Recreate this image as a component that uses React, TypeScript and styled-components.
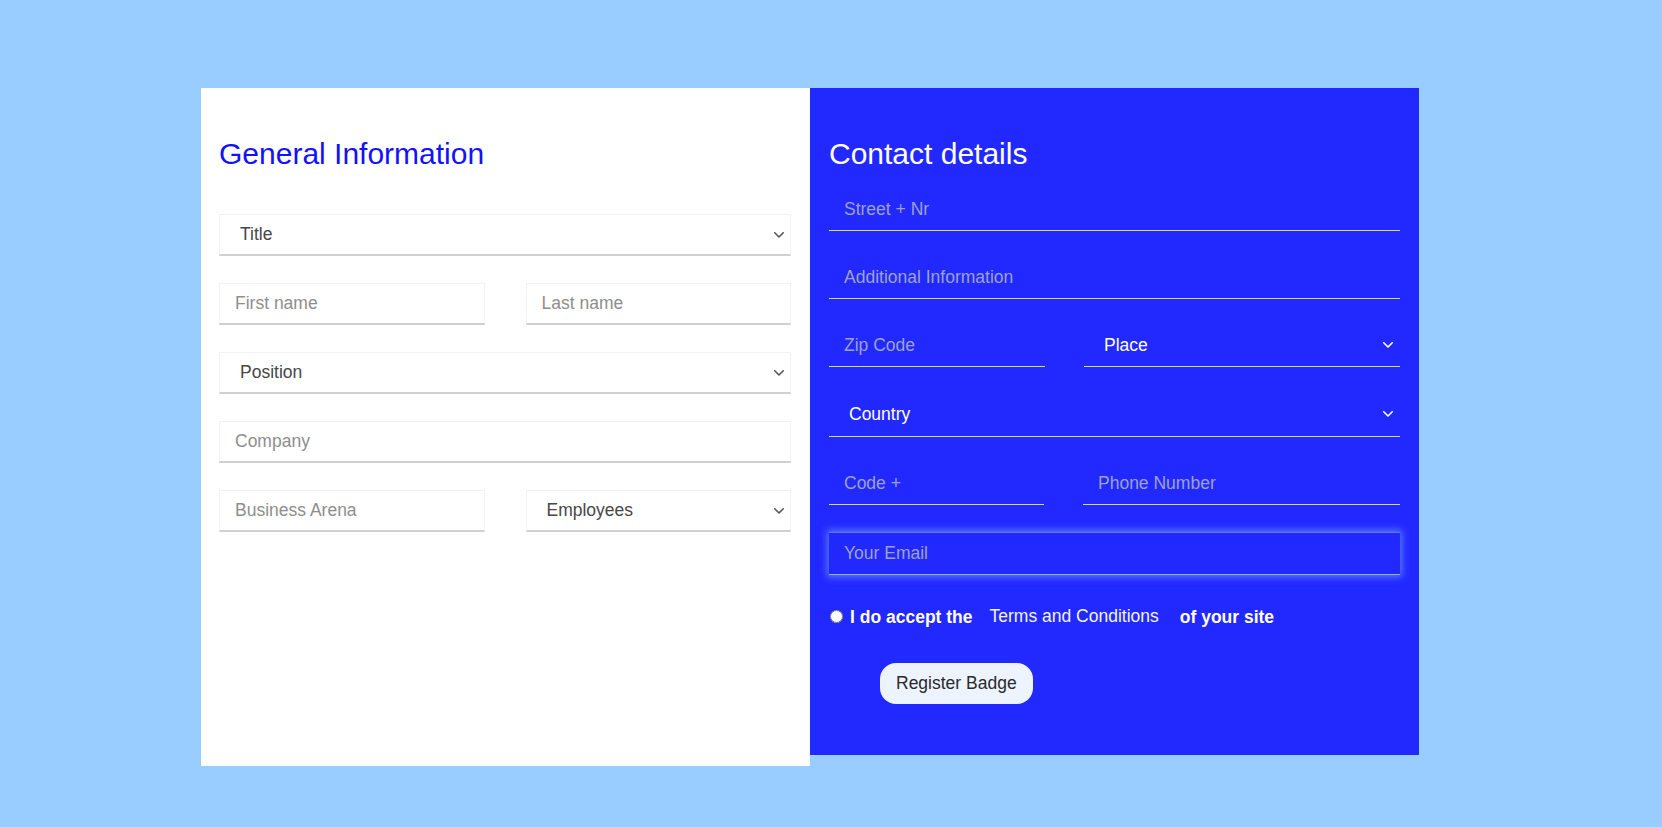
import React from "react";
import styled, { createGlobalStyle } from "styled-components";

const GlobalStyle = createGlobalStyle`
  html, body {
    margin: 0;
    padding: 0;
    background: #99ccff;
  }
  body {
    font-family: "Liberation Sans", Arial, sans-serif;
  }
  *, *::before, *::after {
    box-sizing: border-box;
  }
`;

const Page = styled.div`
  min-height: 827px;
  padding: 88px 0 0 201px;
  display: flex;
  align-items: flex-start;
`;

const Panel = styled.section<{ $dark?: boolean }>`
  width: 609px;
  height: ${(p) => (p.$dark ? 667 : 678)}px;
  padding: 49px 19px 0 ${(p) => (p.$dark ? 19 : 18)}px;
  background: ${(p) => (p.$dark ? "#2229ff" : "#ffffff")};
  display: flex;
  flex-direction: column;
`;

const Heading = styled.h2<{ $dark?: boolean }>`
  margin: 0 0 ${(p) => (p.$dark ? 16 : 42)}px;
  font-size: 30px;
  line-height: 34.5px;
  font-weight: 400;
  color: ${(p) => (p.$dark ? "#ffffff" : "#1212ff")};
`;

const Stack = styled.div<{ $gap: number }>`
  display: flex;
  flex-direction: column;
  gap: ${(p) => p.$gap}px;
`;

const Pair = styled.div<{ $cols: string; $gap: number }>`
  display: grid;
  grid-template-columns: ${(p) => p.$cols};
  column-gap: ${(p) => p.$gap}px;
  align-items: start;
`;

const LightInput = styled.input`
  width: 100%;
  height: 42px;
  margin: 0;
  padding: 0 15px;
  border: 1px solid #f2f2f2;
  border-bottom: 2px solid #d0d0d0;
  background: #ffffff;
  font-family: inherit;
  font-size: 17.5px;
  color: #444;
  outline: none;
  &::placeholder {
    color: #8e8e8e;
  }
`;

const SelectWrap = styled.div`
  position: relative;
  width: 100%;
`;

const LightSelect = styled.select`
  appearance: none;
  width: 100%;
  height: 42px;
  margin: 0;
  padding: 0 30px 0 20px;
  border: 1px solid #f2f2f2;
  border-bottom: 2px solid #d0d0d0;
  border-radius: 0;
  background: #ffffff;
  font-family: inherit;
  font-size: 17.5px;
  color: #474747;
  outline: none;
`;

const DarkInput = styled.input<{ $glow?: boolean }>`
  width: 100%;
  height: 43px;
  margin: ${(p) => (p.$glow ? "2px 0 0" : "0")};
  padding: 0 15px;
  border: none;
  border-top: 1px solid ${(p) => (p.$glow ? "rgba(150,180,255,0.55)" : "transparent")};
  border-bottom: 1px solid ${(p) => (p.$glow ? "#8fb2ff" : "#d3d5f4")};
  background: transparent;
  box-shadow: ${(p) => (p.$glow ? "0 0 7px 2px rgba(110,150,255,0.75)" : "none")};
  font-family: inherit;
  font-size: 17.5px;
  color: #ffffff;
  caret-color: #ffffff;
  outline: none;
  &::placeholder {
    color: #9ca1cd;
  }
`;

const DarkSelect = styled.select<{ $h?: number }>`
  appearance: none;
  width: 100%;
  height: ${(p) => p.$h ?? 43}px;
  margin: 0;
  padding: 0 30px 0 20px;
  border: none;
  border-bottom: 1px solid #d3d5f4;
  border-radius: 0;
  background: transparent;
  font-family: inherit;
  font-size: 17.5px;
  color: #ffffff;
  outline: none;
  option {
    color: #222;
  }
`;

const ChevronSvg = styled.svg<{ $color: string }>`
  position: absolute;
  right: 6px;
  top: 50%;
  transform: translateY(-50%);
  pointer-events: none;
  stroke: ${(p) => p.$color};
`;

const Chevron = ({ color }: { color: string }) => (
  <ChevronSvg $color={color} width="12" height="8" viewBox="0 0 12 8" fill="none">
    <path d="M1.75 1.75 L6 6 L10.25 1.75" strokeWidth="1.6" strokeLinecap="round" strokeLinejoin="round" />
  </ChevronSvg>
);

const CheckRow = styled.div`
  display: flex;
  align-items: center;
  margin-top: 32px;
  color: #ffffff;
  font-size: 17.5px;
  line-height: 20px;
`;

const Radio = styled.input`
  width: 13px;
  height: 13px;
  margin: 0 7px 0 1px;
`;

const Strong = styled.span`
  font-weight: 700;
`;

const TermsLink = styled.span`
  margin: -2px 21px 0 17px;
  color: #f2f3ff;
`;

const RegisterButton = styled.button`
  align-self: flex-start;
  margin: 36px 0 0 51px;
  height: 41px;
  padding: 0 16px;
  border: none;
  border-radius: 16px;
  background: #edf4ff;
  color: #2a2a2a;
  font-family: inherit;
  font-size: 17.5px;
  cursor: pointer;
`;

const LightSelectField = ({ label }: { label: string }) => (
  <SelectWrap>
    <LightSelect defaultValue="">
      <option value="">{label}</option>
    </LightSelect>
    <Chevron color="#555555" />
  </SelectWrap>
);

const DarkSelectField = ({ label, h }: { label: string; h?: number }) => (
  <SelectWrap>
    <DarkSelect defaultValue="" $h={h}>
      <option value="">{label}</option>
    </DarkSelect>
    <Chevron color="#ffffff" />
  </SelectWrap>
);

export default function App() {
  return (
    <>
      <GlobalStyle />
      <Page>
        <Panel>
          <Heading>General Information</Heading>
          <Stack $gap={27}>
            <LightSelectField label="Title" />
            <Pair $cols="1fr 1fr" $gap={41}>
              <LightInput placeholder="First name" />
              <LightInput placeholder="Last name" />
            </Pair>
            <LightSelectField label="Position" />
            <LightInput placeholder="Company" />
            <Pair $cols="1fr 1fr" $gap={41}>
              <LightInput placeholder="Business Arena" />
              <LightSelectField label="Employees" />
            </Pair>
          </Stack>
        </Panel>
        <Panel $dark>
          <Heading $dark>Contact details</Heading>
          <Stack $gap={25}>
            <DarkInput placeholder="Street + Nr" />
            <DarkInput placeholder="Additional Information" />
            <Pair $cols="216px 1fr" $gap={39}>
              <DarkInput placeholder="Zip Code" />
              <DarkSelectField label="Place" />
            </Pair>
            <DarkSelectField label="Country" h={45} />
            <Pair $cols="215px 1fr" $gap={39}>
              <DarkInput placeholder="Code +" />
              <DarkInput placeholder="Phone Number" />
            </Pair>
            <DarkInput $glow autoFocus placeholder="Your Email" />
          </Stack>
          <CheckRow>
            <Radio type="radio" name="accept" />
            <Strong>I do accept the</Strong>
            <TermsLink>Terms and Conditions</TermsLink>
            <Strong>of your site</Strong>
          </CheckRow>
          <RegisterButton type="button">Register Badge</RegisterButton>
        </Panel>
      </Page>
    </>
  );
}
